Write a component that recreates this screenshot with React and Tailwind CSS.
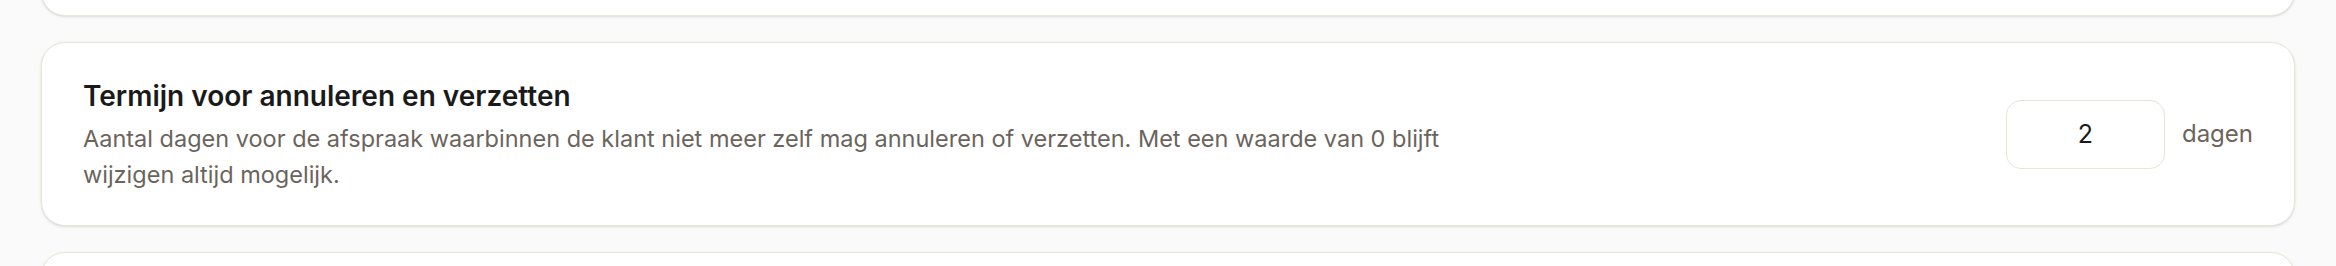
export default function App() {
  return (
    <div
      className="h-[266px] bg-[#fafafa] px-[41px] flex flex-col gap-[26px] overflow-hidden"
      style={{ fontFamily: 'Inter, "Noto Sans", sans-serif' }}
    >
      {/* previous card, mostly cut off */}
      <div className="-mt-[40px] h-[56px] shrink-0 bg-white border-[1.5px] border-[#e9e4da] rounded-[24px] shadow-sm" />

      {/* Cancellation window setting */}
      <div className="bg-white border-[1.5px] border-[#e9e4da] rounded-[24px] shadow-sm px-[41px] h-[184px] shrink-0 flex items-center justify-between gap-8">
        <div className="max-w-[1370px]">
          <h3 className="text-[28px] leading-[40px] font-semibold text-[#1a1a1a]">
            Termijn voor annuleren en verzetten
          </h3>
          <p className="text-[23.5px] leading-[36px] text-[#6b645c] mt-[5px]">
            Aantal dagen voor de afspraak waarbinnen de klant niet meer zelf mag annuleren of verzetten. Met een waarde van 0 blijft wijzigen altijd mogelijk.
          </p>
        </div>
        <div className="flex items-center gap-[17px] shrink-0">
          <input
            type="number"
            defaultValue={2}
            className="w-[159px] h-[69px] border-[1.5px] border-[#e9e4da] rounded-[15px] text-center text-[25px] text-[#1a1a1a] bg-white outline-none [appearance:textfield] [&::-webkit-inner-spin-button]:appearance-none"
          />
          <span className="text-[24px] text-[#6b645c]">dagen</span>
        </div>
      </div>

      {/* next card, mostly cut off */}
      <div className="h-[80px] shrink-0 bg-white border-[1.5px] border-[#e9e4da] rounded-[24px] shadow-sm" />
    </div>
  );
}
